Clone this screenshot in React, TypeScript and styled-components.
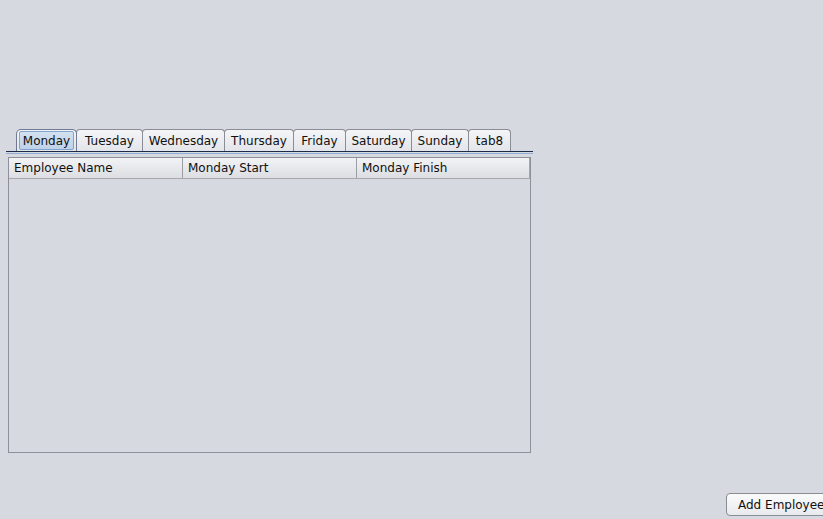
import React from "react";
import styled, { createGlobalStyle } from "styled-components";

const Global = createGlobalStyle`
  html, body { margin: 0; padding: 0; background: #d6d9e0; }
  body { font-family: "DejaVu Sans", "Liberation Sans", sans-serif; }
`;

const Page = styled.div`
  width: 823px;
  height: 519px;
  overflow: hidden;
  display: flex;
  flex-direction: column;
  background: #d6d9e0;
  color: #111;
`;

const TabPane = styled.div`
  margin-top: 129px;
  margin-left: 6px;
  width: 527px;
  display: flex;
  flex-direction: column;
`;

const TabRow = styled.div`
  display: flex;
  padding-left: 10px;
  height: 22px;
`;

const Tab = styled.div<{ $w: number; $selected?: boolean }>`
  box-sizing: border-box;
  width: ${(p) => p.$w}px;
  height: 22px;
  border: 1px solid #8a8d96;
  border-bottom: none;
  margin-right: -1px;
  border-radius: ${(p) => (p.$selected ? "5px 5px 0 0" : "4px 4px 0 0")};
  background: linear-gradient(#f4f5f7, #e3e5ea);
  display: flex;
  align-items: stretch;
  padding: ${(p) => (p.$selected ? "1px 2px 1px 2px" : "0")};
  font-size: 12px;
  line-height: 1;
  position: relative;
  z-index: ${(p) => (p.$selected ? 1 : 0)};
  border-color: ${(p) => (p.$selected ? "#6f7a92" : "#8a8d96")};
`;

const TabLabel = styled.span<{ $selected?: boolean }>`
  flex: 1;
  display: flex;
  align-items: center;
  justify-content: center;
  padding-top: ${(p) => (p.$selected ? "0" : "1px")};
  ${(p) =>
    p.$selected
      ? `
    background: linear-gradient(#d3e1f0, #bfd2e8);
    border: 1px solid #7ea3cc;
    border-radius: 2px;
  `
      : ""}
`;

const Separator = styled.div`
  height: 3px;
  border-top: 1px solid #1d2a48;
  border-bottom: 1px solid #8fb0d4;
  background: #d6d9e0;
  box-sizing: border-box;
`;

const Table = styled.div`
  margin-top: 3px;
  margin-left: 2px;
  width: 523px;
  height: 296px;
  box-sizing: border-box;
  border: 1px solid #8e9099;
  display: flex;
  flex-direction: column;
`;

const HeaderRow = styled.div`
  display: grid;
  grid-template-columns: 174px 174px 1fr;
  height: 21px;
  box-sizing: border-box;
  background: linear-gradient(#f2f3f5, #dcdee3);
  border-bottom: 1px solid #a6a8ae;
`;

const HeaderCell = styled.div<{ $last?: boolean }>`
  display: flex;
  align-items: center;
  padding-left: 5px;
  font-size: 12px;
  border-right: 1px solid ${(p) => (p.$last ? "#a6a8ae" : "#9c9ea5")};
  white-space: nowrap;
`;

const Body = styled.div`
  flex: 1;
`;

const Footer = styled.div`
  margin-top: auto;
  margin-bottom: 3px;
  display: flex;
  justify-content: flex-start;
  padding-left: 726px;
`;

const Button = styled.button`
  box-sizing: border-box;
  flex-shrink: 0;
  width: 110px;
  height: 23px;
  border: 1px solid #8a8d96;
  border-radius: 4px;
  background: linear-gradient(#fbfbfc, #e9eaed);
  font-family: "DejaVu Sans", "Liberation Sans", sans-serif;
  font-size: 12px;
  color: #111;
  text-align: left;
  padding: 0 0 0 11px;
`;

const tabs: [string, number][] = [
  ["Monday", 61],
  ["Tuesday", 67],
  ["Wednesday", 83],
  ["Thursday", 70],
  ["Friday", 53],
  ["Saturday", 67],
  ["Sunday", 58],
  ["tab8", 43],
];

export default function App() {
  return (
    <Page>
      <Global />
      <TabPane>
        <TabRow>
          {tabs.map(([t, w], i) => (
            <Tab key={t} $w={w} $selected={i === 0}>
              <TabLabel $selected={i === 0}>{t}</TabLabel>
            </Tab>
          ))}
        </TabRow>
        <Separator />
        <Table>
          <HeaderRow>
            <HeaderCell>Employee Name</HeaderCell>
            <HeaderCell>Monday Start</HeaderCell>
            <HeaderCell $last>Monday Finish</HeaderCell>
          </HeaderRow>
          <Body />
        </Table>
      </TabPane>
      <Footer>
        <Button>Add Employee</Button>
      </Footer>
    </Page>
  );
}
